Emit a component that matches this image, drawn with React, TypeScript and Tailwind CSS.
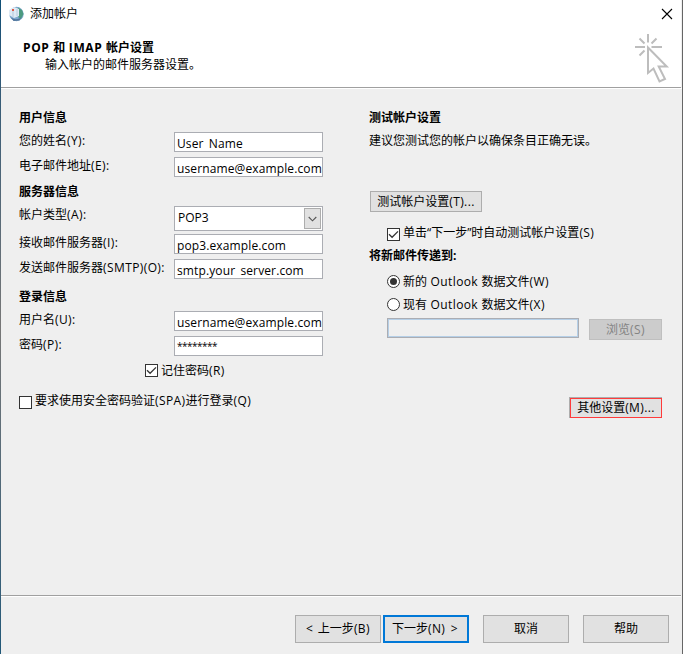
import React from 'react';

// Latin runs are set slightly looser than the Chinese text around them
const Label: React.FC<{ text: string }> = ({ text }) => (
    <>
        {text.split(/([\x20-\x7e]+)/).map((part, i) => (
            i % 2 ? <span key={i} className="tracking-[0.4px]">{part}</span> : part
        ))}
    </>
);

const Field: React.FC<{ label: string; value: string; gap: string; text?: string }> = ({ label, value, gap, text = 'pt-[3px] text-[12px] tracking-[0.12px] [word-spacing:2px]' }) => (
    <div className={`flex h-5 items-start ${gap}`}>
        <span className="w-[155px] leading-[18px]"><Label text={label} /></span>
        <div className={`h-5 w-[149px] border border-[#abadb3] bg-white pl-[2px] leading-[16px] ${text}`}>
            {value}
        </div>
    </div>
);

const Heading: React.FC<{ children: string; gap: string }> = ({ children, gap }) => (
    <h2 className={`h-[18px] leading-[18px] font-bold ${gap}`}>{children}</h2>
);

const Box: React.FC<{ checked?: boolean }> = ({ checked }) => (
    <span className="block h-[13px] w-[13px] border border-[#333333] bg-white">
        {checked && (
            <svg width="11" height="11" viewBox="0 0 11 11" fill="none" stroke="#333333" strokeWidth="1.3">
                <path d="M1 5.3L4.1 8.3L10 2.4" />
            </svg>
        )}
    </span>
);

const Radio: React.FC<{ checked?: boolean }> = ({ checked }) => (
    <span className="flex h-[13px] w-[13px] items-center justify-center rounded-full border border-[#333333] bg-white">
        {checked && <span className="h-[7px] w-[7px] rounded-full bg-[#333333]" />}
    </span>
);

const Button: React.FC<{ children: string; className: string }> = ({ children, className }) => (
    <button className={`flex items-center justify-center whitespace-pre ${className}`}>
        <span><Label text={children} /></span>
    </button>
);

const GlobeIcon = () => (
    <svg width="16" height="16" viewBox="0 0 16 16">
        <circle cx="8.5" cy="8" r="7.2" fill="#7fa9cf" />
        <path d="M10 1.5l4 2.5 1.5 4-2.5 5-3-2 1-3-2-2z" fill="#4c9a80" />
        <path d="M1.5 10c3 4 9 4 12 1l-2 3.5-6 .5z" fill="#52759b" />
        <path d="M1 4l5-3 5 2v7l-5 2-5-3z" fill="#dfeaf4" />
        <path d="M5 5v6M9 3v7" stroke="#b4c8da" />
        <rect x="4" y="3" width="2" height="2" fill="#df5843" />
    </svg>
);

const ClickCursor = () => (
    <svg width="36" height="52" viewBox="0 0 36 52" fill="none" stroke="#bdbdbd" strokeWidth="2">
        <path d="M14 1v8.500M1 14h10M17.500 14h10.500M5.500 5.500l5 5M22.500 5.500l-5 5M5.500 22.500l5-5" />
        <path d="M14 14.500v25.500l5.500-4.500 6 13 5.500-2.500-6.300-12.500h8z" />
    </svg>
);

const App: React.FC = () => {
    return (
        <div className="flex h-[654px] w-[683px] bg-[#efefef] font-['Open_Sans','Noto_Sans_CJK_SC',sans-serif] text-[12px] whitespace-nowrap text-black">
            <div className="w-px bg-gradient-to-b from-[#0f4f76] via-[#777777] to-[#205878]" />
            <div className="flex w-[681px] flex-col">
                <header className="mr-px h-[88px] border-b border-[#a0a0a0] bg-white">
                    <div className="flex h-[27px] items-center justify-between pl-[7px] pr-[8px]">
                        <div className="flex items-center gap-[6px]">
                            <GlobeIcon />
                            <span>添加帐户</span>
                        </div>
                        <svg width="12" height="12" viewBox="0 0 12 12" stroke="#000" strokeWidth="1.1">
                            <path d="M1 1l10 10M11 1L1 11" />
                        </svg>
                    </div>
                    <div className="flex h-[60px] justify-between pl-[22px] pr-[11px]">
                        <div className="pt-3">
                            <h1 className="leading-[17px] font-bold">
                                <span className="tracking-[0.6px]">POP </span>和<span className="tracking-[0.6px]"> IMAP </span>帐户设置
                            </h1>
                            <p className="pl-[22px] leading-[18px]">输入帐户的邮件服务器设置。</p>
                        </div>
                        <div className="pt-[6px]">
                            <ClickCursor />
                        </div>
                    </div>
                </header>
                <div className="h-px bg-white" />

                <main className="flex h-[506px] pl-[18px]">
                    <section className="w-[350px] pt-5">
                        <Heading gap="">用户信息</Heading>
                        <Field label="您的姓名(Y):" value="User Name" gap="mt-[5px]" />
                        <Field label="电子邮件地址(E):" value="username@example.com" gap="mt-[5px]" />
                        <Heading gap="mt-[6px]">服务器信息</Heading>
                        <div className="mt-[5px] flex h-[25px] items-start">
                            <span className="w-[155px] leading-[18px]"><Label text="帐户类型(A):" /></span>
                            <div className="flex h-[25px] w-[149px] justify-between border border-[#abadb3] bg-white p-px pl-[3px]">
                                <span className="leading-[20px]">POP3</span>
                                <span className="flex h-[21px] w-[17px] items-center justify-center border border-[#adadad] bg-[#e1e1e1]">
                                    <svg width="9" height="6" viewBox="0 0 9 6" fill="none" stroke="#555555" strokeWidth="1.1">
                                        <path d="M.7 1l3.8 3.8L8.3 1" />
                                    </svg>
                                </span>
                            </div>
                        </div>
                        <Field label="接收邮件服务器(I):" value="pop3.example.com" gap="mt-[3px]" />
                        <Field label="发送邮件服务器(SMTP)(O):" value="smtp.your server.com" gap="mt-[5px]" />
                        <Heading gap="mt-[9px]">登录信息</Heading>
                        <Field label="用户名(U):" value="username@example.com" gap="mt-[5px]" />
                        <Field label="密码(P):" value="********" gap="mt-[5px]" text="pt-px text-[10px] tracking-[-0.5px]" />
                        <div className="mt-[6px] ml-[126px] flex h-[18px] gap-[3px]">
                            <span className="pt-[2px]"><Box checked /></span>
                            <span className="leading-[18px]"><Label text="记住密码(R)" /></span>
                        </div>
                        <div className="mt-[12px] flex h-[18px] gap-[3px]">
                            <span className="pt-[4px]"><Box /></span>
                            <span className="leading-[18px]"><Label text="要求使用安全密码验证(SPA)进行登录(Q)" /></span>
                        </div>
                    </section>

                    <section className="w-[293px] pt-5">
                        <Heading gap="">测试帐户设置</Heading>
                        <p className="mt-[5px] h-[18px] leading-[18px]">建议您测试您的帐户以确保条目正确无误。</p>
                        <Button className="mt-[41px] ml-px h-[21px] w-[112px] border border-[#adadad] bg-[#e1e1e1]">测试帐户设置(T)...</Button>
                        <div className="mt-[12px] ml-[18px] flex h-[18px] gap-[3px]">
                            <span className="pt-[4px]"><Box checked /></span>
                            <span className="leading-[18px]"><Label text="单击“下一步”时自动测试帐户设置(S)" /></span>
                        </div>
                        <Heading gap="mt-[5px]">将新邮件传递到:</Heading>
                        <div className="mt-[8px] ml-[18px] flex h-[18px] gap-[3px]">
                            <span className="pt-[2px]"><Radio checked /></span>
                            <span className="leading-[18px]"><Label text="新的 Outlook 数据文件(W)" /></span>
                        </div>
                        <div className="mt-[5px] ml-[18px] flex h-[18px] gap-[3px]">
                            <span className="pt-[2px]"><Radio /></span>
                            <span className="leading-[18px]"><Label text="现有 Outlook 数据文件(X)" /></span>
                        </div>
                        <div className="mt-[4px] ml-[18px] flex h-[22px] items-start gap-[10px]">
                            <div className="h-5 w-[192px] border border-[#abadb3]">
                                <div className="h-full border border-[#b5cfe7]" />
                            </div>
                            <Button className="mt-px h-[21px] w-[73px] border border-[#bfbfbf] bg-[#cccccc] text-[#838383]">浏览(S)</Button>
                        </div>
                        <div className="mt-[57px] ml-[200px] h-[21px] w-[93px] border-t border-l border-[#adadad]">
                            <Button className="h-5 w-[92px] border border-[#ff3b3b] bg-[#e1e1e1]">其他设置(M)...</Button>
                        </div>
                    </section>
                </main>

                <footer className="mr-px border-t border-[#a0a0a0]">
                    <div className="h-px bg-white" />
                    <div className="flex justify-end pt-[18px] pr-3">
                        <Button className="h-7 w-[86px] border border-[#adadad] bg-[#e1e1e1] [word-spacing:1px]">{'< 上一步(B)'}</Button>
                        <Button className="ml-[2px] h-7 w-[86px] border-2 border-[#0078d7] bg-[#e1e1e1] pr-[2px] [word-spacing:2px]">{'下一步(N) >'}</Button>
                        <Button className="ml-[14px] h-7 w-[86px] border border-[#adadad] bg-[#e1e1e1]">取消</Button>
                        <Button className="ml-[14px] h-7 w-[86px] border border-[#adadad] bg-[#e1e1e1]">帮助</Button>
                    </div>
                </footer>
            </div>
            <div className="w-px bg-[#666666]" />
        </div>
    );
};

export default App;
